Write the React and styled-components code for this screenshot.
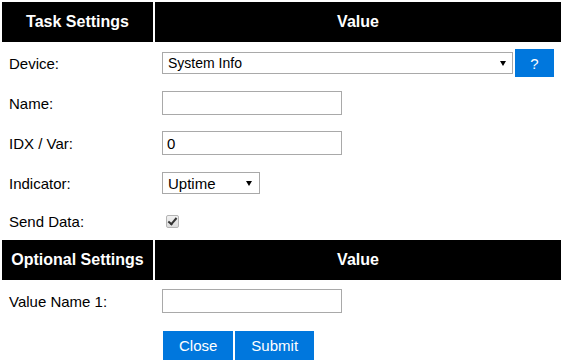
import styled, { createGlobalStyle } from "styled-components";

const Global = createGlobalStyle`
  body {
    margin: 0;
    background: #ffffff;
    font-family: "Liberation Sans", Arial, sans-serif;
  }
`;

const Table = styled.table`
  border-spacing: 2px;
  width: 563px;
  color: #000000;
  font-size: 15px;
`;

const Row = styled.tr`
  height: ${(p) => p.$h}px;
`;

const HeadCell = styled.th`
  background: #000000;
  color: #ffffff;
  font-size: 16px;
  font-weight: bold;
  padding: 0;
  text-align: center;
  white-space: nowrap;
  width: ${(p) => (p.$w ? `${p.$w}px` : "auto")};
`;

const Cell = styled.td`
  padding: ${(p) => (p.$top ? `${p.$top}px 7px 0` : "0 7px")};
  vertical-align: ${(p) => (p.$top ? "top" : "middle")};
  white-space: nowrap;
`;

const Inline = styled.div`
  display: flex;
  align-items: center;
  gap: 2px;
`;

const TextInput = styled.input`
  box-sizing: border-box;
  width: 180px;
  height: 24px;
  border: 1px solid #a9a9a9;
  padding: 0 4px;
  font-family: "Liberation Sans", Arial, sans-serif;
  font-size: 15px;
  color: #000000;
  outline: none;
`;

const SelectWrap = styled.div`
  position: relative;
  display: inline-block;

  &::after {
    content: "";
    position: absolute;
    right: ${(p) => p.$arrow}px;
    top: 50%;
    margin-top: -2px;
    border-left: 3px solid transparent;
    border-right: 3px solid transparent;
    border-top: 5px solid #000000;
    pointer-events: none;
  }
`;

const Select = styled.select`
  appearance: none;
  box-sizing: border-box;
  width: ${(p) => p.$w}px;
  height: 22px;
  border: 1px solid #a9a9a9;
  border-radius: 0;
  background: #ffffff;
  padding: 0 0 0 5px;
  font-family: "Liberation Sans", Arial, sans-serif;
  font-size: ${(p) => p.$fs}px;
  color: #000000;
  outline: none;
`;

const HelpButton = styled.button`
  width: 39px;
  height: 28px;
  margin: -3px 0;
  border: none;
  background: #0077dd;
  color: #ffffff;
  font-family: "Liberation Sans", Arial, sans-serif;
  font-size: 15px;
  padding: 0;
`;

const Check = styled.input`
  appearance: none;
  box-sizing: border-box;
  width: 13px;
  height: 13px;
  margin: 3px 3px 3px 4px;
  border: 1px solid #b4b4b4;
  border-radius: 2px;
  background: linear-gradient(#f2f2f2, #dcdcdc);
  position: relative;
  vertical-align: middle;

  &:checked::after {
    content: "";
    position: absolute;
    left: 3px;
    top: 0px;
    width: 3px;
    height: 7px;
    border-right: 2px solid #333333;
    border-bottom: 2px solid #333333;
    transform: rotate(40deg);
  }
`;

const ButtonBar = styled.div`
  display: flex;
  gap: 2px;
  padding-left: 1px;
`;

const Button = styled.button`
  height: 29px;
  padding: 0 16px;
  border: none;
  background: #0077dd;
  color: #ffffff;
  font-family: "Liberation Sans", Arial, sans-serif;
  font-size: 15px;
`;

export default function App() {
  return (
    <>
      <Global />
      <Table>
        <tbody>
          <Row $h={40}>
            <HeadCell $w={151}>Task Settings</HeadCell>
            <HeadCell>Value</HeadCell>
          </Row>
          <Row $h={38}>
            <Cell>Device:</Cell>
            <Cell>
              <Inline>
                <SelectWrap $arrow={7}>
                  <Select $w={351} $fs={14} defaultValue="sysinfo">
                    <option value="sysinfo">System Info</option>
                  </Select>
                </SelectWrap>
                <HelpButton>?</HelpButton>
              </Inline>
            </Cell>
          </Row>
          <Row $h={38}>
            <Cell>Name:</Cell>
            <Cell>
              <TextInput defaultValue="" />
            </Cell>
          </Row>
          <Row $h={38}>
            <Cell>IDX / Var:</Cell>
            <Cell>
              <TextInput defaultValue="0" />
            </Cell>
          </Row>
          <Row $h={38}>
            <Cell>Indicator:</Cell>
            <Cell>
              <SelectWrap $arrow={8}>
                <Select $w={98} $fs={15} defaultValue="uptime">
                  <option value="uptime">Uptime</option>
                </Select>
              </SelectWrap>
            </Cell>
          </Row>
          <Row $h={34}>
            <Cell>Send Data:</Cell>
            <Cell>
              <Check type="checkbox" defaultChecked />
            </Cell>
          </Row>
          <Row $h={40}>
            <HeadCell $w={151}>Optional Settings</HeadCell>
            <HeadCell>Value</HeadCell>
          </Row>
          <Row $h={38}>
            <Cell>Value Name 1:</Cell>
            <Cell>
              <TextInput defaultValue="" />
            </Cell>
          </Row>
          <Row $h={45}>
            <Cell />
            <Cell $top={9}>
              <ButtonBar>
                <Button>Close</Button>
                <Button>Submit</Button>
              </ButtonBar>
            </Cell>
          </Row>
        </tbody>
      </Table>
    </>
  );
}
